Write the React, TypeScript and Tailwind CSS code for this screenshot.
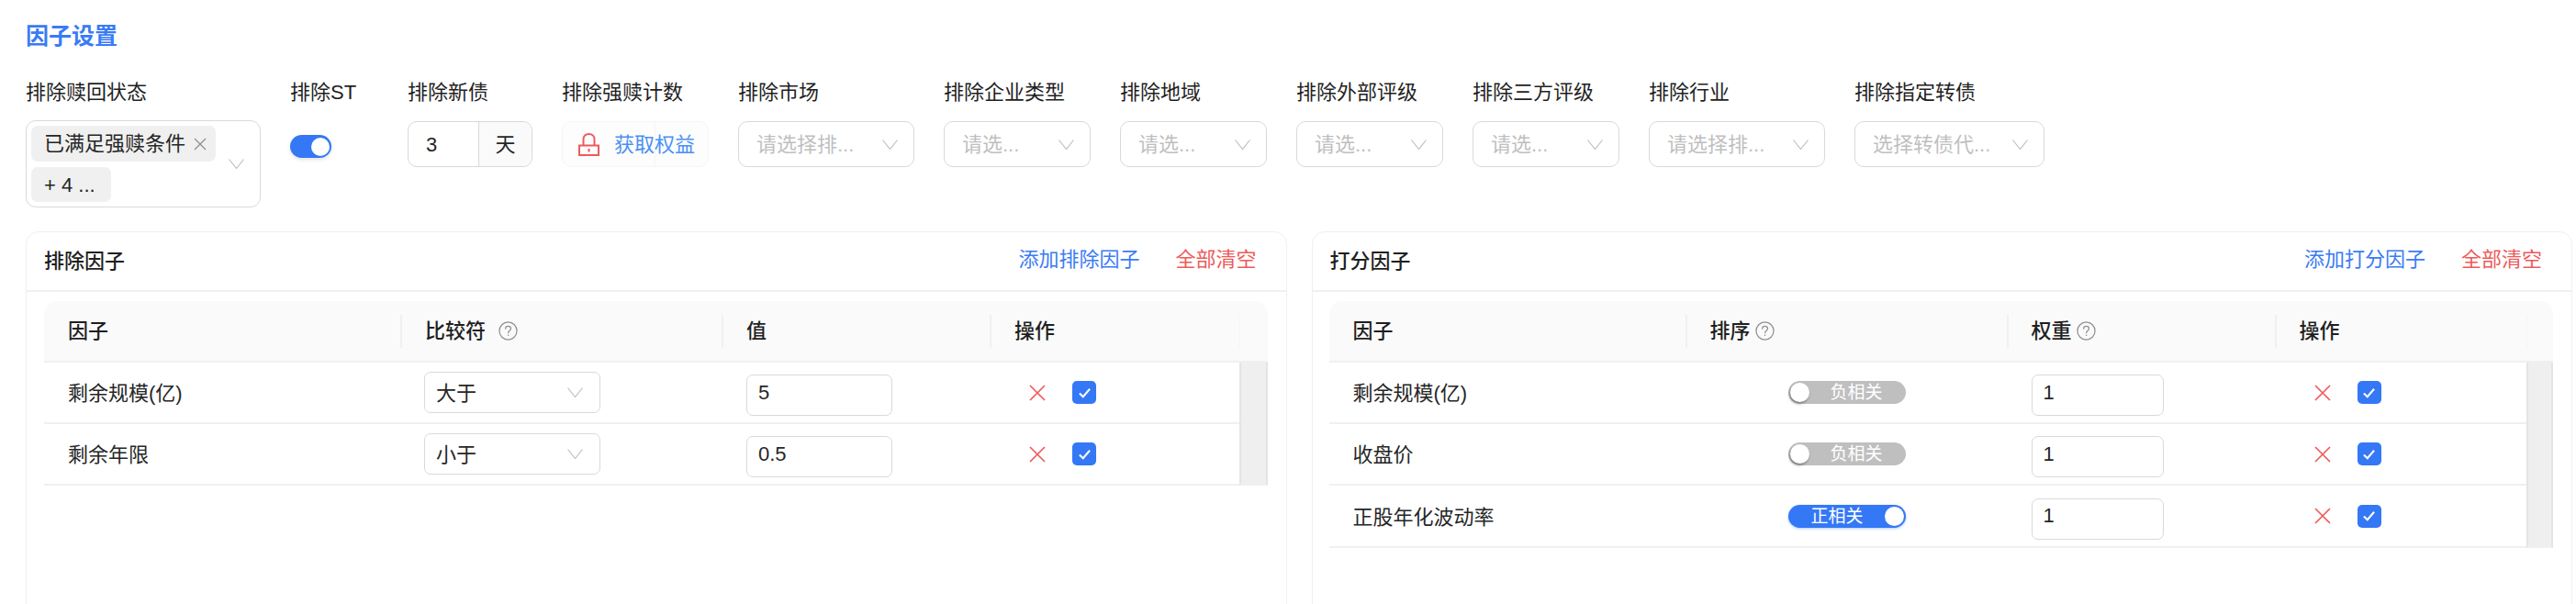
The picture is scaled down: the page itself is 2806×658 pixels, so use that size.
import type { ReactNode } from 'react'

const blue = 'text-[#3a7bf5]'

function Chevron({ className = 'w-[17px] h-[11px]' }: { className?: string }) {
  return (
    <svg viewBox="0 0 17 11" className={`${className} shrink-0 text-[#bfbfbf]`} fill="none" stroke="currentColor" strokeWidth="1.2">
      <polyline points="0.5,0.5 8.5,10.5 16.5,0.5" />
    </svg>
  )
}

function Help() {
  return (
    <svg viewBox="0 0 22 22" className="h-[21px] w-[21px] shrink-0" fill="none" stroke="#8f8f8f" strokeWidth="1.3">
      <circle cx="11" cy="11" r="10" />
      <path d="M8 8.6c0-1.8 1.4-3 3.1-3s3 1.100 3 2.700c0 2.400-3 2.500-3 5" strokeLinecap="round" />
      <circle cx="11.100" cy="16" r="0.800" fill="#8f8f8f" stroke="none" />
    </svg>
  )
}

function LockIcon() {
  return (
    <svg viewBox="0 0 23 25" className="h-[25px] w-[23px] shrink-0" fill="none" stroke="#ee5a5a" strokeWidth="2">
      <path d="M5.500 13V6.500C5.500 3.200 8 1 11.500 1s6 2.200 6 5.500V13" />
      <rect x="1" y="13.500" width="21" height="10.500" />
      <rect x="10.500" y="17" width="2" height="3.500" fill="#ee5a5a" stroke="none" />
    </svg>
  )
}

function Remove() {
  return (
    <svg viewBox="0 0 18 18" className="h-[18px] w-[18px] shrink-0" fill="none" stroke="#ee5a5a" strokeWidth="1.700">
      <path d="M1 1l16 16M17 1L1 17" />
    </svg>
  )
}

function Check() {
  return (
    <span className="flex h-[25px] w-[26px] shrink-0 items-center justify-center rounded-[5px] bg-[#3478f6]">
      <svg viewBox="0 0 16 14" className="h-[12px] w-[15px]" fill="none" stroke="white" strokeWidth="2.400">
        <path d="M1.500 7.500l4.500 4.500 8.500-10" />
      </svg>
    </span>
  )
}

function Field({ label, width, children }: { label: string; width: string; children: ReactNode }) {
  return (
    <div className={`shrink-0 ${width}`}>
      <div className="mb-4 h-[30px] whitespace-nowrap leading-[30px] text-[#1f1f1f]">{label}</div>
      {children}
    </div>
  )
}

function Placeholder({ text }: { text: string }) {
  return (
    <div className="flex h-[50px] items-center justify-between rounded-[10px] border border-[#d9d9d9] pl-[19px] pr-[17px] text-[#bfbfbf]">
      <span className="whitespace-nowrap">{text}</span>
      <Chevron />
    </div>
  )
}

function Switch({ on, label }: { on: boolean; label: string }) {
  if (on) {
    return (
      <span className="flex h-[25px] w-[128px] shrink-0 items-center rounded-full bg-[#3478f6] pl-[25px] pr-[2px] text-[19px] text-white shadow-[0_1px_3px_rgba(52,120,246,0.4)]">
        <span className="flex-1 pt-[2px]">{label}</span>
        <span className="h-[21px] w-[21px] rounded-full bg-white" />
      </span>
    )
  }
  return (
    <span className="flex h-[25px] w-[128px] shrink-0 items-center rounded-full bg-[#bfbfbf] pl-[2px] pr-[25px] text-[19px] text-white">
      <span className="h-[21px] w-[21px] rounded-full bg-white shadow-[-1px_2px_3px_rgba(0,0,0,0.35)]" />
      <span className="flex-1 pt-[2px] text-right">{label}</span>
    </span>
  )
}

function HeadCell({ children, first, faint }: { children?: ReactNode; first?: boolean; faint?: boolean }) {
  const edge = first ? 'pl-[26px]' : faint ? 'border-l border-[#f5f5f5]' : 'border-l-2 border-[#f0f0f0] pl-[25px]'
  return <div className={`flex h-[36px] items-center font-medium text-[#1f1f1f] ${edge}`}>{children}</div>
}

function TextInput({ value, width }: { value: string; width: string }) {
  return (
    <input
      readOnly
      value={value}
      className={`mt-[6px] h-[45px] rounded-[7px] border border-[#d9d9d9] bg-white pb-[6px] pl-[12px] text-[#262626] outline-none ${width}`}
    />
  )
}

function Actions() {
  return (
    <div className="flex items-center gap-[29px] pl-[43px]">
      <Remove />
      <Check />
    </div>
  )
}

function Card({
  title,
  addLabel,
  head,
  rows,
  headCols,
  barWidth,
  inset,
}: {
  title: string
  addLabel: string
  head: ReactNode
  rows: ReactNode[]
  headCols: string
  barWidth: string
  inset: string
}) {
  return (
    <section className="h-[460px] min-w-0 flex-1 rounded-t-[14px] border border-[#f0f0f0] bg-white">
      <header className="flex h-[65px] items-center justify-between border-b-2 border-[#f0f0f0] pl-[19px] pr-[32px]">
        <h2 className="font-medium text-[#1f1f1f]">{title}</h2>
        <div className="flex gap-[39px] pb-[4px]">
          <span className={blue}>{addLabel}</span>
          <span className="text-[#ee5a5a]">全部清空</span>
        </div>
      </header>
      <div className={`mt-[10px] ${inset}`}>
        <div className="w-[1333px]">
          <div className={`grid h-[67px] items-center rounded-t-[14px] border-b-2 border-[#f0f0f0] bg-[#fafafa] ${headCols}`}>
            {head}
          </div>
          <div className="flex">
            <div className="min-w-0 flex-1">{rows}</div>
            <div className={`shrink-0 border-x-2 border-b-2 border-x-[#e4e4e4] border-b-[#f0f0f0] bg-[#efefef] ${barWidth}`} />
          </div>
        </div>
      </div>
    </section>
  )
}

function Row({ name, tall, children }: { name: string; tall?: boolean; children: ReactNode }) {
  return (
    <div className={`grid grid-cols-[388px_350px_292px_1fr] items-center border-b-2 border-[#f0f0f0] text-[#262626] ${tall ? 'h-[68px]' : 'h-[67px]'}`}>
      <div className="pl-[26px] pt-[2px]">{name}</div>
      {children}
    </div>
  )
}

const excludeRows = [
  { name: '剩余规模(亿)', op: '大于', value: '5' },
  { name: '剩余年限', op: '小于', value: '0.5' },
]

const scoreRows = [
  { name: '剩余规模(亿)', on: false },
  { name: '收盘价', on: false },
  { name: '正股年化波动率', on: true },
]

export default function App() {
  return (
    <div className="h-[658px] w-[2806px] overflow-hidden bg-white pl-[28px] pr-[4px] pt-[20px] font-['Liberation_Sans','Noto_Sans_CJK_SC',sans-serif] text-[22px]">
      <h1 className={`h-[38px] text-[25px] font-semibold leading-[38px] ${blue}`}>因子设置</h1>

      <div className="mt-[28px] flex h-[140px] gap-8">
        <Field label="排除赎回状态" width="w-[256px]">
          <div className="-mt-px flex h-[95px] items-center rounded-[11px] border border-[#d9d9d9] pl-[5px] pr-[17px]">
            <div className="flex flex-1 flex-col items-start gap-[6px]">
              <span className="flex h-[39px] w-[201px] items-center gap-[9px] rounded-[7px] bg-[#f0f0f0] pl-[14px] text-[#262626]">
                已满足强赎条件
                <svg viewBox="0 0 14 14" className="h-[14px] w-[14px]" fill="none" stroke="#8c8c8c" strokeWidth="1.200">
                  <path d="M1 1l12 12M13 1L1 13" />
                </svg>
              </span>
              <span className="flex h-[38px] w-[87px] items-center rounded-[7px] bg-[#f0f0f0] pl-[14px] text-[#262626]">+ 4 ...</span>
            </div>
            <Chevron />
          </div>
        </Field>

        <Field label="排除ST" width="w-[96px]">
          <div className="mt-[31px] flex h-[25px] w-[45px] items-center justify-end rounded-full bg-[#3478f6] pr-[2px] shadow-[0_2px_4px_rgba(0,0,0,0.12)]">
            <span className="h-[20px] w-[20px] rounded-full bg-white" />
          </div>
        </Field>

        <Field label="排除新债" width="w-[136px]">
          <div className="flex h-[50px] rounded-[10px] border border-[#d9d9d9] text-[#262626]">
            <span className="flex w-[76px] items-center pl-[19px]">3</span>
            <span className="flex flex-1 items-center justify-center rounded-r-[10px] border-l border-[#d9d9d9] bg-[#fafafa]">天</span>
          </div>
        </Field>

        <Field label="排除强赎计数" width="w-[160px]">
          <div className="relative flex h-[50px] items-center gap-[16px] rounded-[10px] border border-[#f5f5f5] bg-[#fdfdfd] pl-[17px] text-[#4a90f5]">
            <span className="absolute inset-y-0 left-[100px] w-px bg-[#f5f5f5]" />
            <LockIcon />
            <span className="relative whitespace-nowrap">获取权益</span>
          </div>
        </Field>

        <Field label="排除市场" width="w-[192px]"><Placeholder text="请选择排..." /></Field>
        <Field label="排除企业类型" width="w-[160px]"><Placeholder text="请选..." /></Field>
        <Field label="排除地域" width="w-[160px]"><Placeholder text="请选..." /></Field>
        <Field label="排除外部评级" width="w-[160px]"><Placeholder text="请选..." /></Field>
        <Field label="排除三方评级" width="w-[160px]"><Placeholder text="请选..." /></Field>
        <Field label="排除行业" width="w-[192px]"><Placeholder text="请选择排..." /></Field>
        <Field label="排除指定转债" width="w-[207px]"><Placeholder text="选择转债代..." /></Field>
      </div>

      <div className="mt-[26px] flex gap-[27px]">
        <Card
          title="排除因子"
          addLabel="添加排除因子"
          headCols="grid-cols-[388px_350px_292px_272px_1fr]"
          barWidth="w-[31px]"
          inset="pl-[19px]"
          head={
            <>
              <HeadCell first>因子</HeadCell>
              <HeadCell>比较符<span className="ml-[14px]"><Help /></span></HeadCell>
              <HeadCell>值</HeadCell>
              <HeadCell>操作</HeadCell>
              <HeadCell faint />
            </>
          }
          rows={excludeRows.map((row) => (
            <Row key={row.name} name={row.name}>
              <div className="pl-[26px]">
                <div className="flex h-[45px] w-[192px] items-center justify-between rounded-[7px] border border-[#d9d9d9] pl-[12px] pr-[18px]">
                  <span className="pt-[2px]">{row.op}</span>
                  <Chevron />
                </div>
              </div>
              <div className="pl-[27px]"><TextInput value={row.value} width="w-[159px]" /></div>
              <Actions />
            </Row>
          ))}
        />
        <Card
          title="打分因子"
          addLabel="添加打分因子"
          headCols="grid-cols-[388px_350px_292px_274px_1fr]"
          barWidth="w-[29px]"
          inset="pl-[18px]"
          head={
            <>
              <HeadCell first>因子</HeadCell>
              <HeadCell>排序<span className="ml-[5px]"><Help /></span></HeadCell>
              <HeadCell>权重<span className="ml-[5px]"><Help /></span></HeadCell>
              <HeadCell>操作</HeadCell>
              <HeadCell faint />
            </>
          }
          rows={scoreRows.map((row, i) => (
            <Row key={row.name} name={row.name} tall={i === 2}>
              <div className="pl-[112px]">
                <Switch on={row.on} label={row.on ? '正相关' : '负相关'} />
              </div>
              <div className="pl-[27px]"><TextInput value="1" width="w-[144px]" /></div>
              <Actions />
            </Row>
          ))}
        />
      </div>
    </div>
  )
}
